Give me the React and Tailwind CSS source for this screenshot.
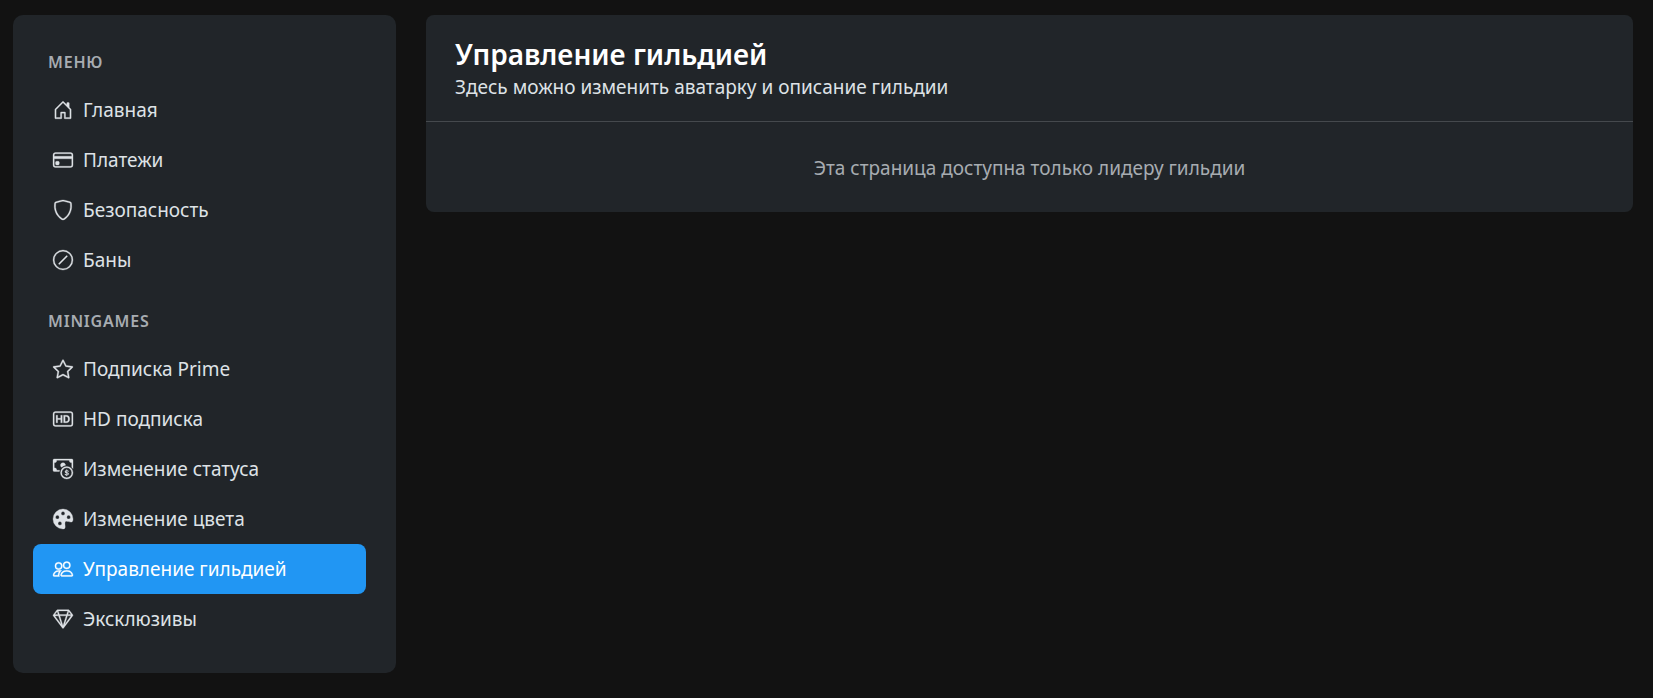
import React from 'react';
import {
  BsHouseDoor,
  BsCreditCard,
  BsShield,
  BsSlashCircle,
  BsStar,
  BsBadgeHd,
  BsCashCoin,
  BsPaletteFill,
  BsPeople,
  BsGem,
} from 'react-icons/bs';

const sections = [
  {
    title: 'МЕНЮ',
    items: [
      { label: 'Главная', icon: BsHouseDoor },
      { label: 'Платежи', icon: BsCreditCard },
      { label: 'Безопасность', icon: BsShield },
      { label: 'Баны', icon: BsSlashCircle },
    ],
  },
  {
    title: 'MINIGAMES',
    items: [
      { label: 'Подписка Prime', icon: BsStar },
      { label: 'HD подписка', icon: BsBadgeHd },
      { label: 'Изменение статуса', icon: BsCashCoin },
      { label: 'Изменение цвета', icon: BsPaletteFill },
      { label: 'Управление гильдией', icon: BsPeople, active: true },
      { label: 'Эксклюзивы', icon: BsGem },
    ],
  },
];

const NavItem = ({ label, icon: Icon, active }) => (
  <li>
    <a
      href="#"
      aria-current={active ? 'page' : undefined}
      className={`flex items-center gap-[10px] rounded-lg px-5 py-[10px] leading-[30px] ${
        active ? 'bg-[#2196f3] text-white' : 'text-[#dee2e6] hover:text-white'
      }`}
    >
      <Icon className="size-5 shrink-0 overflow-visible stroke-current stroke-[0.25]" />
      {label}
    </a>
  </li>
);

const Sidebar = () => (
  <nav className="flex w-[383px] shrink-0 flex-col gap-[19px] rounded-[10px] bg-[#212529] pt-[30px] pr-[30px] pb-[29px] pl-5">
    {sections.map((section) => (
      <div key={section.title}>
        <h2 className="mb-[11px] px-[15px] pt-[5px] text-base leading-6 font-semibold tracking-wider text-[#a7acb1]">
          {section.title}
        </h2>
        <ul>
          {section.items.map((item) => (
            <NavItem key={item.label} {...item} />
          ))}
        </ul>
      </div>
    ))}
  </nav>
);

const App = () => {
  return (
    <div className="min-h-screen bg-[#121212] font-['Noto_Sans','Open_Sans',sans-serif] text-[19px] text-[#dee2e6]">
      <div className="flex items-start gap-[30px] pt-[15px] pr-5 pb-6 pl-[13px]">
        <Sidebar />
        <main className="min-w-0 flex-1 rounded-lg bg-[#212529]">
          <header className="border-b border-[#45494d] px-[29px] pt-[23px] pb-[17px]">
            <h1 className="text-[28px] leading-8 font-semibold text-white">Управление гильдией</h1>
            <p className="leading-[34px]">Здесь можно изменить аватарку и описание гильдии</p>
          </header>
          <p className="px-[30px] pt-[31px] pb-[29px] text-center leading-[30px] text-[#a7acb1]">
            Эта страница доступна только лидеру гильдии
          </p>
        </main>
      </div>
    </div>
  );
};

export default App;
